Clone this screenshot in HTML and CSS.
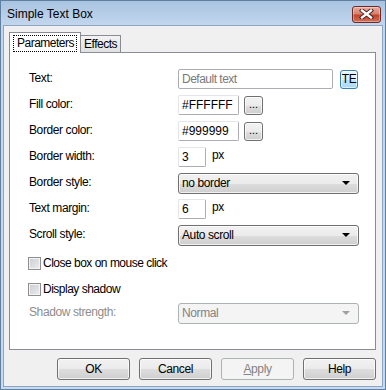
FILE: index.html
```html
<!DOCTYPE html>
<html lang="en">
<head>
  <meta charset="UTF-8" />
  <title>Simple Text Box</title>
  <link rel="stylesheet" href="styles.css">
</head>
<body>

<div class="window">
  <div class="titlebar">
    <span class="title">Simple Text Box</span>
    <button class="close-btn">
      <svg width="15" height="10" viewBox="0 0 15 10">
        <path d="M3 1.5 L12 8.5 M12 1.5 L3 8.5" stroke="#3b1c1c" stroke-width="4.2" stroke-linecap="square"/>
        <path d="M3 1.5 L12 8.5 M12 1.5 L3 8.5" stroke="#ffffff" stroke-width="2.4" stroke-linecap="square"/>
      </svg>
    </button>
  </div>

  <div class="client">
    <div class="tabs">
      <div class="tab active"><span class="focus">Parameters</span></div>
      <div class="tab">Effects</div>
    </div>

    <div class="panel">
      <div class="row">
        <span class="label">Text:</span>
        <div class="input wide placeholder">Default text</div>
        <button class="te-btn">TE</button>
      </div>
      <div class="row">
        <span class="label">Fill color:</span>
        <div class="input color">#FFFFFF</div>
        <button class="dots-btn">...</button>
      </div>
      <div class="row">
        <span class="label">Border color:</span>
        <div class="input color">#999999</div>
        <button class="dots-btn">...</button>
      </div>
      <div class="row">
        <span class="label">Border width:</span>
        <div class="input num">3</div>
        <span class="unit">px</span>
      </div>
      <div class="row">
        <span class="label">Border style:</span>
        <div class="select"><span>no border</span><i class="arrow"></i></div>
      </div>
      <div class="row">
        <span class="label">Text margin:</span>
        <div class="input num">6</div>
        <span class="unit">px</span>
      </div>
      <div class="row">
        <span class="label">Scroll style:</span>
        <div class="select"><span>Auto scroll</span><i class="arrow"></i></div>
      </div>

      <div class="row check-row first-check">
        <span class="checkbox"></span>
        <span class="check-label">Close box on mouse click</span>
      </div>
      <div class="row check-row">
        <span class="checkbox"></span>
        <span class="check-label">Display shadow</span>
      </div>
      <div class="row last-row">
        <span class="label disabled">Shadow strength:</span>
        <div class="select disabled"><span>Normal</span><i class="arrow"></i></div>
      </div>
    </div>

    <div class="buttons">
      <button class="btn">OK</button>
      <button class="btn">Cancel</button>
      <button class="btn disabled"><u>A</u>pply</button>
      <button class="btn">Help</button>
    </div>
  </div>
</div>

</body>
</html>
```

FILE: styles.css
```css
* { box-sizing: border-box; margin: 0; padding: 0; }

body {
  font-family: 'Liberation Sans', Arial, sans-serif;
  font-size: 11px;
  letter-spacing: -0.2px;
  color: #000;
  background: #fff;
}

.window {
  width: 386px;
  height: 390px;
  display: flex;
  flex-direction: column;
  border: 1px solid #5f7fa3;
  background: linear-gradient(to bottom, #a9c3e0 0px, #c2d6ee 24px, #c6daf0 100%);
  padding: 0 2px 2px 2px;
}

/* title bar */
.titlebar {
  height: 24px;
  display: flex;
  align-items: center;
  padding-left: 4px;
}

.title {
  font-size: 12px;
  letter-spacing: 0;
  color: #000;
  margin-top: 1px;
}

.close-btn {
  margin-left: auto;
  margin-right: 2px;
  margin-top: 2px;
  width: 29px;
  height: 17px;
  border: 1px solid #6a2a25;
  border-radius: 3px;
  background: linear-gradient(to bottom, #e9aa9c 0%, #d8826f 45%, #c2432b 55%, #d3705a 100%);
  box-shadow: inset 0 0 0 1px rgba(255,255,255,0.35);
  display: flex;
  align-items: center;
  justify-content: center;
}

/* client area */
.client {
  flex: 1;
  background: #f0f0f0;
  border: 1px solid #8da5c2;
  padding: 6px 6px 0 5px;
  display: flex;
  flex-direction: column;
}

.tabs {
  display: flex;
  align-items: flex-end;
  height: 20px;
  position: relative;
  z-index: 1;
}

.tab {
  height: 17px;
  padding: 0 3px;
  border: 1px solid #898c95;
  border-bottom: none;
  background: linear-gradient(to bottom, #f3f3f3, #e1e1e1);
  display: flex;
  align-items: center;
  font-size: 12px;
  letter-spacing: -0.5px;
  margin-left: -1px;
}

.tab.active {
  height: 21px;
  margin-bottom: -1px;
  margin-left: 0;
  padding: 0 3px;
  background: #fff;
  z-index: 2;
}

.focus {
  border: 1px dotted #000;
  padding: 0 2px 1px 3px;
  line-height: 14px;
}

.panel {
  height: 298px;
  background: #fff;
  border: 1px solid #898c95;
  padding: 16px 0 0 19px;
  display: flex;
  flex-direction: column;
  gap: 6px;
}

.row {
  display: flex;
  align-items: center;
  height: 20px;
}

.label {
  width: 149px;
  align-self: flex-start;
  padding-top: 2px;
  font-size: 12px;
  letter-spacing: -0.4px;
}

.label.disabled { color: #8d8d8d; }

.input {
  height: 20px;
  border: 1px solid #abadb3;
  border-top-color: #e3e5e8;
  border-left-color: #e3e5e8;
  border-radius: 2px;
  background: #fff;
  padding: 0 3px;
  display: flex;
  align-items: center;
  font-size: 12px;
}

.input.wide {
  width: 155px;
  border-color: #abadb3;
  letter-spacing: -0.5px;
}

.placeholder { color: #7a7a7a; }

.input.color { width: 61px; letter-spacing: 0; }
.input.num { width: 28px; }

.unit {
  margin-left: 6px;
  align-self: flex-start;
  padding-top: 1px;
  font-size: 12px;
  letter-spacing: -0.4px;
}

.te-btn {
  margin-left: 7px;
  width: 18px;
  height: 19px;
  border: 1px solid #3c7fb1;
  border-radius: 3px;
  background: linear-gradient(to bottom, #eaf6fd 0%, #d9f0fc 50%, #bee6fd 51%, #a7d9f5 100%);
  font-family: 'Liberation Sans', Arial, sans-serif;
  font-size: 12px;
  letter-spacing: -0.5px;
  color: #000;
  box-shadow: inset 0 0 0 1px rgba(255,255,255,0.6);
  padding: 0;
}

.dots-btn {
  margin-left: 5px;
  width: 19px;
  height: 19px;
  border: 1px solid #707070;
  border-radius: 3px;
  background: linear-gradient(to bottom, #f2f2f2 0%, #ebebeb 50%, #dddddd 51%, #cfcfcf 100%);
  font-family: 'Liberation Sans', Arial, sans-serif;
  font-size: 11px;
  line-height: 12px;
  padding: 0 0 2px 0;
  box-shadow: inset 0 0 0 1px rgba(255,255,255,0.7);
}

.select {
  width: 181px;
  height: 21px;
  border: 1px solid #707070;
  border-radius: 3px;
  background: linear-gradient(to bottom, #f2f2f2 0%, #ebebeb 50%, #dddddd 51%, #cfcfcf 100%);
  box-shadow: inset 0 0 0 1px rgba(255,255,255,0.7);
  display: flex;
  align-items: center;
  padding: 0 8px 0 3px;
  font-size: 12px;
  letter-spacing: -0.4px;
}

.select span { flex: 1; }

.arrow {
  width: 0;
  height: 0;
  border-left: 4px solid transparent;
  border-right: 4px solid transparent;
  border-top: 4px solid #000;
}

.select.disabled {
  border-color: #adb2b5;
  background: #f4f4f4;
  color: #838383;
  box-shadow: none;
}

.select.disabled .arrow { border-top-color: #a0a0a0; }

.check-row { gap: 2px; margin-left: -1px; }
.first-check { margin-top: 2px; }
.last-row { margin-top: -2px; }

.checkbox {
  width: 13px;
  height: 13px;
  border: 1px solid #8e8f8f;
  background: linear-gradient(135deg, #c9ccd1, #eeeeee);
  box-shadow: inset 0 0 0 1px #f4f4f4;
}

.check-label {
  font-size: 12px;
  letter-spacing: -0.5px;
  margin-top: -1px;
}

/* dialog buttons */
.buttons {
  display: flex;
  justify-content: flex-end;
  gap: 9px;
  margin-top: 8px;
}

.btn {
  width: 73px;
  height: 22px;
  border: 1px solid #707070;
  border-radius: 3px;
  background: linear-gradient(to bottom, #f2f2f2 0%, #ebebeb 50%, #dddddd 51%, #cfcfcf 100%);
  box-shadow: inset 0 0 0 1px rgba(255,255,255,0.7);
  font-family: 'Liberation Sans', Arial, sans-serif;
  font-size: 12px;
  letter-spacing: -0.4px;
  color: #000;
}

.btn.disabled {
  border-color: #adb2b5;
  background: #f4f4f4;
  color: #838383;
  box-shadow: none;
}

.btn u { text-decoration: underline; }
```
